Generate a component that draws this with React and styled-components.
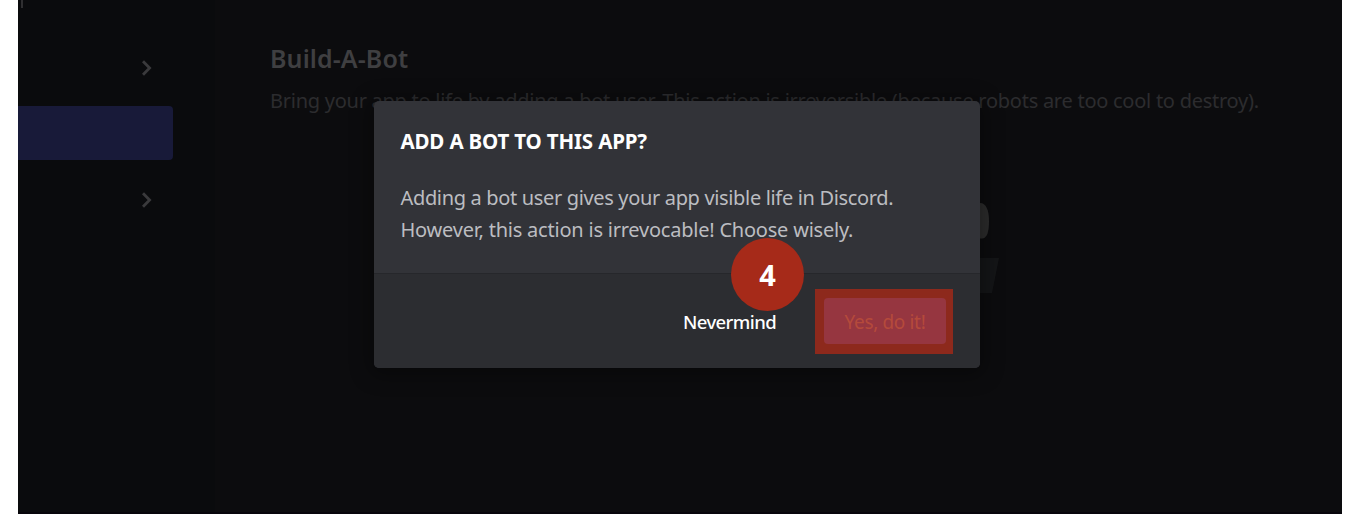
import React from "react";
import styled, { createGlobalStyle } from "styled-components";

const GlobalStyle = createGlobalStyle`
  * { box-sizing: border-box; }
  body {
    margin: 0;
    background: #fff;
    font-family: "Noto Sans", "Open Sans", sans-serif;
    overflow: hidden;
  }
  h1, h2, p { margin: 0; }
`;

const Page = styled.div`
  position: relative;
  display: flex;
  width: 1324px;
  height: 514px;
  margin: 0 24px 0 18px;
  background: #0c0c0e;
  border-bottom: 2px solid #07050b;
  overflow: hidden;
`;

const Sidebar = styled.nav`
  width: 197px;
  background: #0a0b0d;
  display: flex;
  flex-direction: column;
`;

const CaretLine = styled.span`
  width: 2px;
  height: 8px;
  margin-left: 3px;
  background: #2f2f31;
`;

const NavRow = styled.div`
  width: 155px;
  height: ${(p) => p.$height}px;
  margin-top: ${(p) => p.$gap || 0}px;
  padding-right: 21px;
  display: flex;
  align-items: center;
  justify-content: flex-end;
  border-radius: 0 4px 4px 0;
  background: ${(p) => (p.$active ? "#181a39" : "transparent")};
`;

const Main = styled.main`
  flex: 1;
  padding: 42px 0 0 55px;
  white-space: nowrap;
`;

const Heading = styled.h1`
  font-size: 25px;
  line-height: 32px;
  font-weight: 600;
  letter-spacing: 0.1px;
  color: #3f3f41;
`;

const Description = styled.p`
  margin-top: 11px;
  font-size: 20px;
  line-height: 32px;
  letter-spacing: -0.257px;
  color: #2c2c2f;
`;

const Illustration = styled.svg`
  position: absolute;
  left: 942px;
  top: 190px;
`;

const Dialog = styled.section`
  position: absolute;
  left: 355.5px;
  top: 101px;
  width: 606.5px;
  height: 267px;
  display: flex;
  flex-direction: column;
  border-radius: 5px;
  overflow: hidden;
  background: #323338;
  white-space: nowrap;
`;

const DialogShade = styled(Dialog)`
  background: none;
  overflow: visible;
  box-shadow: 0 3px 20px 4px rgba(0, 0, 0, 0.35);
`;

const DialogBody = styled.div`
  height: 173px;
  padding: 24px 0 0 27px;
  border-bottom: 1px solid #26272b;
`;

const DialogTitle = styled.h2`
  font-size: 20.5px;
  line-height: 32px;
  font-weight: 700;
  letter-spacing: -0.16px;
  color: #fff;
`;

const DialogText = styled.p`
  font-size: 20px;
  line-height: 32px;
  color: #bcbdc1;
  margin-top: ${(p) => p.$gap || 0}px;
  letter-spacing: ${(p) => p.$track || 0}px;
`;

const Footer = styled.footer`
  flex: 1;
  display: flex;
  align-items: flex-start;
  justify-content: flex-end;
  padding: 15px 27px 0 0;
  background: #2c2d31;
`;

const TextButton = styled.button`
  border: 0;
  padding: 0;
  margin: 17px 39px 0 0;
  background: none;
  font: 500 18.5px/32px "Noto Sans", sans-serif;
  letter-spacing: -0.6px;
  color: #fff;
`;

const Highlight = styled.div`
  width: 138px;
  height: 65px;
  padding: 9px 7px 10px 9px;
  display: flex;
  background: #8d291c;
`;

const DangerButton = styled.button`
  flex: 1;
  border: 0;
  padding: 2px 0 0;
  border-radius: 4px;
  background: #963640;
  color: #b54a3b;
  font: 400 19px/44px "Noto Sans", sans-serif;
  letter-spacing: -0.35px;
`;

const Step = styled.div`
  position: absolute;
  left: 713px;
  top: 238px;
  width: 73px;
  height: 73px;
  display: flex;
  align-items: center;
  justify-content: center;
  border-radius: 50%;
  background: #a62a19;
  color: #fff;
  font: 700 29px/40px "Open Sans", sans-serif;
`;

const Chevron = () => (
  <svg width="10" height="16" viewBox="0 0 10 16" fill="none">
    <path d="M1 1.2 L7.6 8 L1 14.8" stroke="#3a3a3c" strokeWidth="2.8" />
  </svg>
);

export default function App() {
  return (
    <>
      <GlobalStyle />
      <Page>
        <Sidebar>
          <CaretLine />
          <NavRow $height={53} $gap={33}><Chevron /></NavRow>
          <NavRow $height={54} $gap={12} $active />
          <NavRow $height={54} $gap={13}><Chevron /></NavRow>
        </Sidebar>
        <Main>
          <Heading>Build-A-Bot</Heading>
          <Description>
            Bring your app to life by adding a bot user. This action is irreversible (because robots are too cool to destroy).
          </Description>
        </Main>
        <Illustration width="50" height="110" viewBox="0 0 50 110">
          <path d="M5 13 H20 C26 13 29 20 29 31 C29 42 27 48.500 22 48.500 H5 Z" fill="#2c2c2c" />
          <path d="M5 68 H39 L32 103 H5 Z" fill="#141517" />
        </Illustration>
        <DialogShade as="div" />
        <Dialog>
          <DialogBody>
            <DialogTitle>ADD A BOT TO THIS APP?</DialogTitle>
            <DialogText $gap={25} $track={-0.34}>Adding a bot user gives your app visible life in Discord.</DialogText>
            <DialogText $track={-0.22}>However, this action is irrevocable! Choose wisely.</DialogText>
          </DialogBody>
          <Footer>
            <TextButton>Nevermind</TextButton>
            <Highlight>
              <DangerButton>Yes, do it!</DangerButton>
            </Highlight>
          </Footer>
        </Dialog>
        <Step>4</Step>
      </Page>
    </>
  );
}
